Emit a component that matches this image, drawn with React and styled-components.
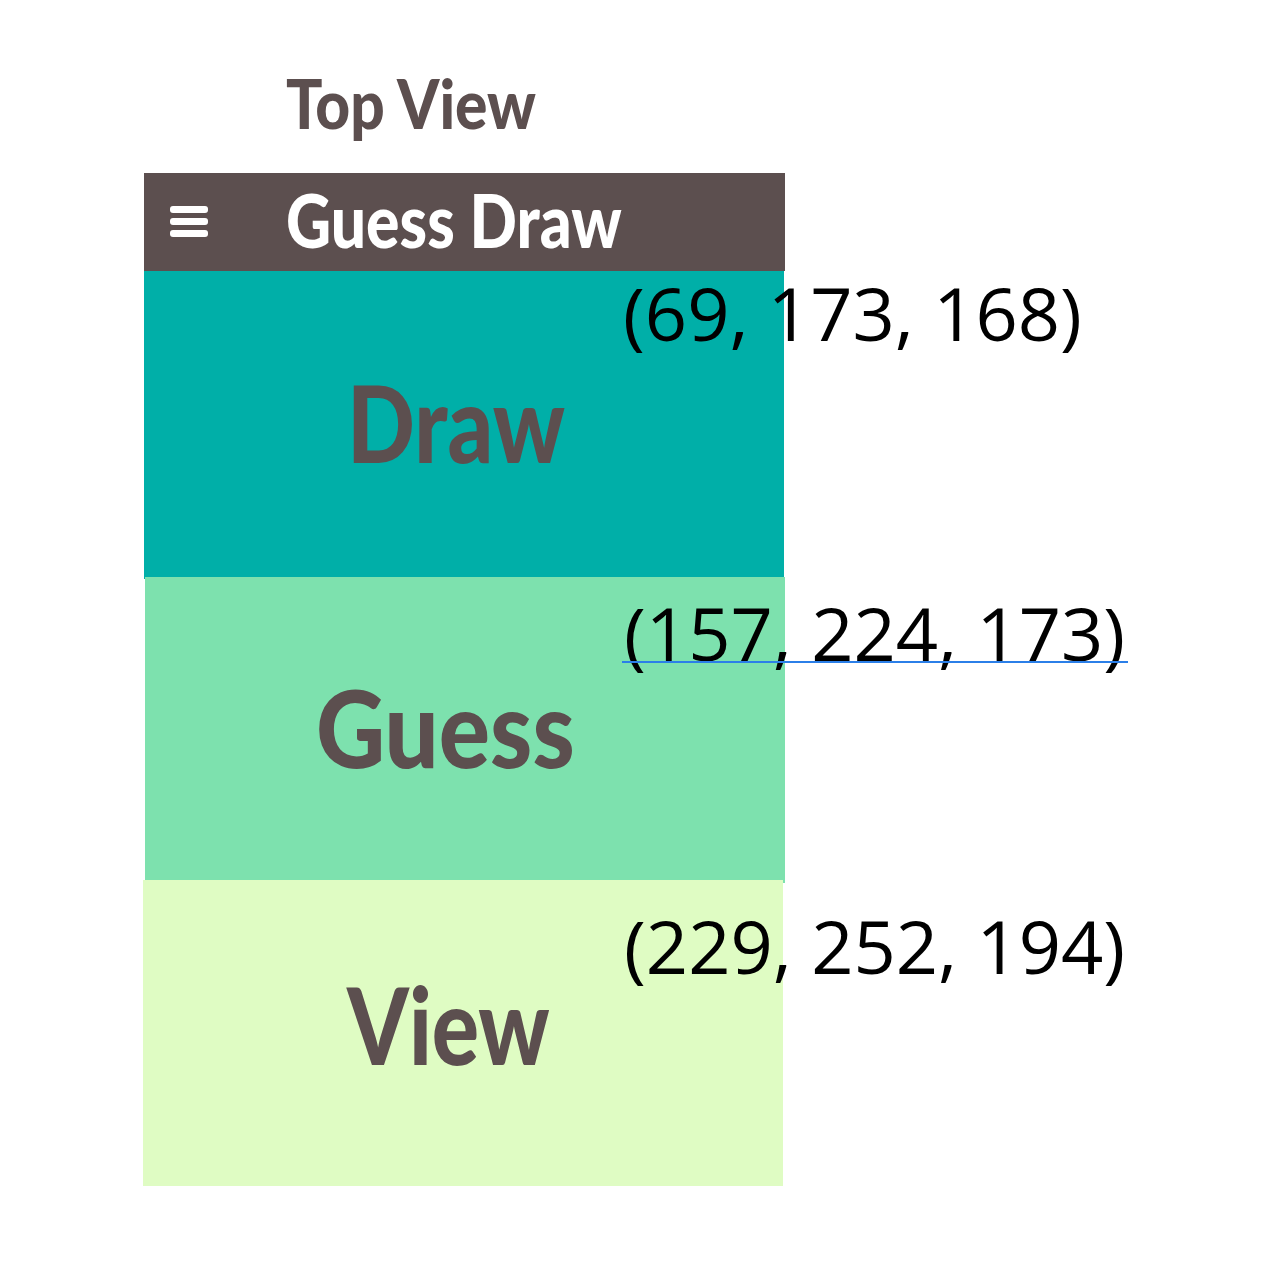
import styled, { createGlobalStyle } from "styled-components";

const BROWN = "#5c4f4f";

const GlobalStyle = createGlobalStyle`
  html, body {
    margin: 0;
    padding: 0;
    background: #ffffff;
  }
`;

const panels = [
  { label: "Draw", rgb: "(69, 173, 168)", bg: "#00afa8", left: 144, height: 308, pad: 87, textLeft: 203, squeeze: 0.835, noteLeft: 479, noteTop: -2 },
  { label: "Guess", rgb: "(157, 224, 173)", bg: "#7de1ae", left: 145, height: 306, pad: 86, textLeft: 171, squeeze: 0.894, noteLeft: 479, noteTop: 12, line: true },
  { label: "View", rgb: "(229, 252, 194)", bg: "#dffcc3", left: 143, height: 306, pad: 80, textLeft: 204, squeeze: 0.824, noteLeft: 481, noteTop: 22 },
];

function App() {
  return (
    <Page>
      <GlobalStyle />
      <Heading>Top View</Heading>
      <AppBar>
        <MenuIcon viewBox="0 0 38 32" aria-hidden="true">
          <rect x="0" y="0" width="38" height="7" rx="3" />
          <rect x="0" y="12" width="38" height="7" rx="3" />
          <rect x="0" y="24" width="38" height="7" rx="3" />
        </MenuIcon>
        <AppTitle>Guess Draw</AppTitle>
      </AppBar>
      <Panels>
        {panels.map((p) => (
          <Panel key={p.label} $bg={p.bg} $left={p.left} $height={p.height} $pad={p.pad}>
            <PanelLabel $left={p.textLeft} $squeeze={p.squeeze}>{p.label}</PanelLabel>
            <Note $left={p.noteLeft} $top={p.noteTop}>{p.rgb}</Note>
            {p.line && <GuideLine />}
          </Panel>
        ))}
      </Panels>
    </Page>
  );
}

const Page = styled.div`
  width: 1278px;
  height: 1274px;
  overflow: hidden;
  padding-top: 66px;
  box-sizing: border-box;
  font-family: "Lato", "Open Sans", sans-serif;
`;
const Heading = styled.h1`
  margin: 0 0 0 286px;
  height: 107px;
  font-size: 68px;
  line-height: 74px;
  font-weight: 900;
  white-space: nowrap;
  color: ${BROWN};
  transform: scaleX(0.89);
  transform-origin: left center;
`;
const AppBar = styled.header`
  display: flex;
  align-items: center;
  width: 641px;
  height: 98px;
  margin-left: 144px;
  background: ${BROWN};
`;
const MenuIcon = styled.svg`
  width: 38px;
  height: 32px;
  margin-left: 26px;
  fill: #ffffff;
`;
const AppTitle = styled.div`
  margin-left: 78px;
  margin-bottom: 6px;
  font-size: 75px;
  font-weight: 900;
  line-height: 1;
  white-space: nowrap;
  color: #ffffff;
  transform: scaleX(0.832);
  transform-origin: left center;
`;
const Panels = styled.main`
  display: flex;
  flex-direction: column;
`;
const Panel = styled.section`
  position: relative;
  box-sizing: border-box;
  width: 640px;
  height: ${(p) => p.$height}px;
  margin-left: ${(p) => p.$left}px;
  margin-bottom: -3px;
  padding-top: ${(p) => p.$pad}px;
  background: ${(p) => p.$bg};

  &:first-child {
    margin-bottom: -2px;
  }
`;
const PanelLabel = styled.div`
  margin-left: ${(p) => p.$left}px;
  font-size: 107px;
  font-weight: 900;
  line-height: 1.2;
  white-space: nowrap;
  color: ${BROWN};
  transform: scaleX(${(p) => p.$squeeze});
  transform-origin: left center;
`;
const Note = styled.div`
  position: absolute;
  left: ${(p) => p.$left}px;
  top: ${(p) => p.$top}px;
  font-family: "Open Sans", "Noto Sans", sans-serif;
  font-size: 74px;
  line-height: 1.2;
  white-space: nowrap;
  color: #000000;
`;
const GuideLine = styled.div`
  position: absolute;
  z-index: 1;
  left: 477px;
  top: 84px;
  width: 506px;
  height: 2px;
  background: #2b7fe8;
`;

export default App;
